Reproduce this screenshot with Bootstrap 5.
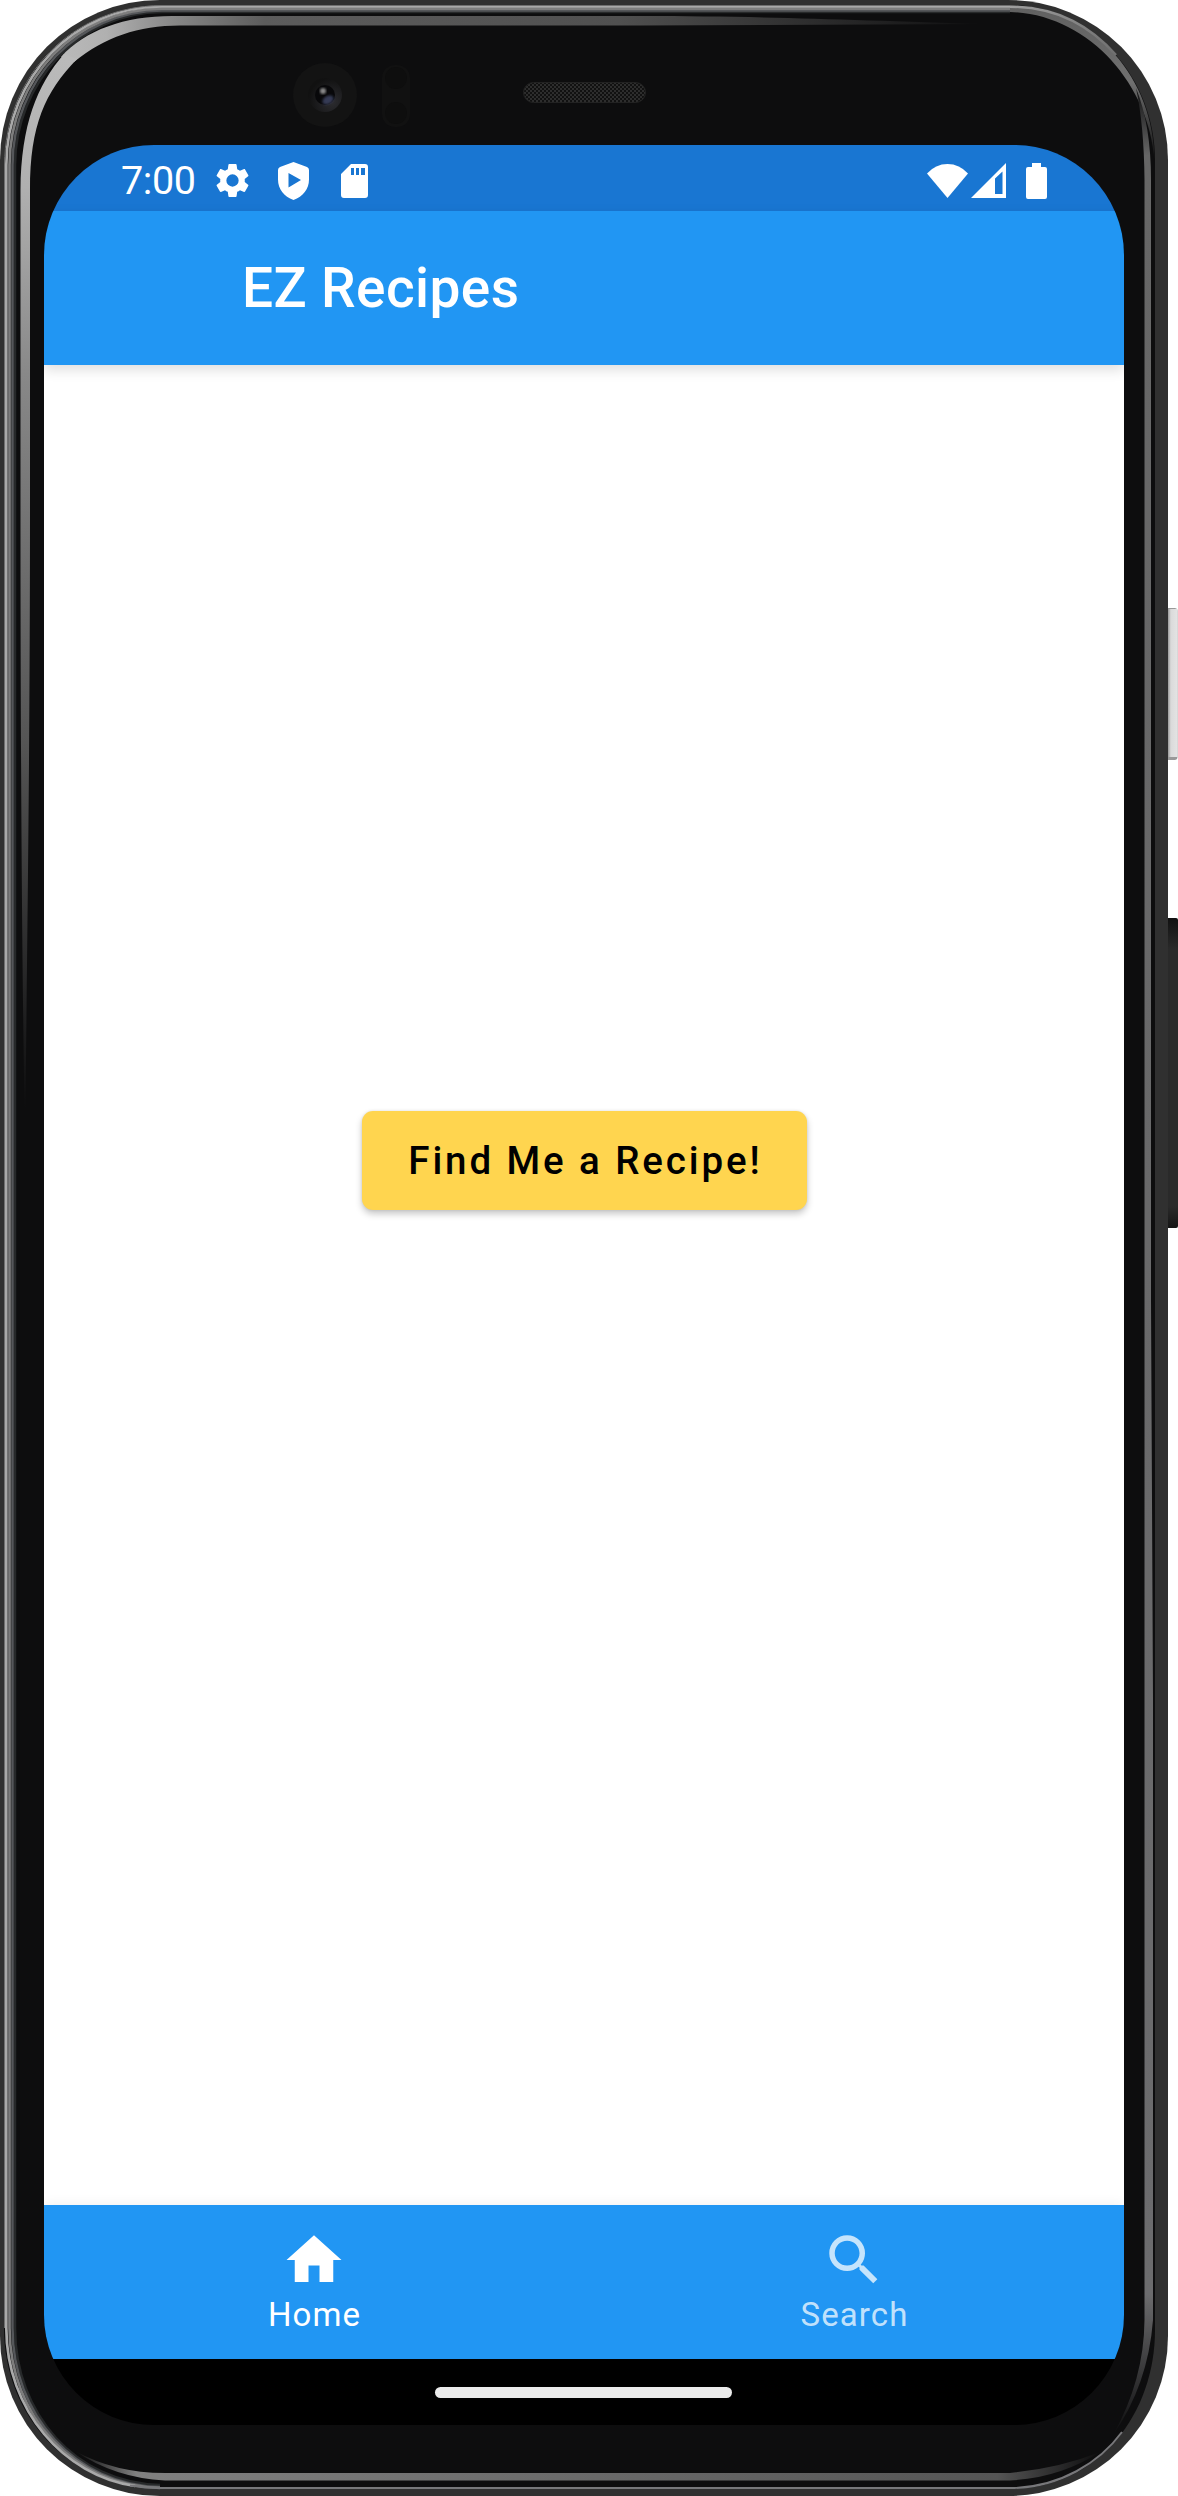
<!DOCTYPE html>
<html lang="en">
<head>
<meta charset="utf-8">
<meta name="viewport" content="width=device-width, initial-scale=1">
<title>EZ Recipes</title>
<link href="https://cdn.jsdelivr.net/npm/bootstrap@5.3.0/dist/css/bootstrap.min.css" rel="stylesheet">
<style>
  body { font-family: Roboto, "Liberation Sans", sans-serif; background: #fff; }
  .device { width: 1178px; height: 2496px; padding: 145px 54px 71px 44px; }
  .device-frame { position: absolute; inset: 0; }
  .screen { width: 1080px; height: 2280px; border-radius: 110px; }
  .status-bar { height: 66px; background: #1976d2; padding: 0 77px 0 77px; }
  .status-clock { font-size: 39.5px; line-height: 66px; padding-top: 5px; letter-spacing: -.4px; width: 75px; white-space: nowrap; }
  .status-icons { padding-top: 5px; }
  .status-icons svg { display: block; }
  .shield { margin-left: 25px; }
  .sdcard { margin-left: 32px; }
  .signal { margin: 0 20px 0 3px; }
  .app-bar { height: 154px; background: #2196f3; padding: 0 0 0 198px; box-shadow: 0 5px 12px rgba(0,0,0,.13); }
  .app-title { font-size: 55px; font-weight: 500; line-height: 154px; letter-spacing: .4px; color: #fff; }
  .home-view { padding-bottom: 249px; background: #fff; }
  .btn-find { width: 445px; height: 99px; border-radius: 11px; background: #ffd54f; color: #000; border: 0; font-size: 38.5px; font-weight: 500; letter-spacing: 2.9px; padding: 0 0 0 3px; box-shadow: 0 4px 7px rgba(0,0,0,.22), 0 0 3px rgba(0,0,0,.1); }
  .btn-find:hover { background: #ffca28; color: #000; }
  .bottom-nav { height: 154px; background: #2196f3; box-shadow: 0 0 12px rgba(0,0,0,.07); }
  .tab-link { padding: 22px 0 0; color: rgba(255,255,255,.74); font-size: 33px; line-height: 39px; letter-spacing: 1.1px; }
  .tab-link.active { color: #fff; }
  .tab-link svg { display: block; margin-bottom: 2px; }
  .tab-link span { padding-left: 1px; }
  .gesture-bar { height: 66px; background: #000; padding-right: 1px; }
  .gesture-pill { width: 297px; height: 11px; border-radius: 6px; background: #ebebeb; }
</style>
<script src="https://cdn.jsdelivr.net/npm/bootstrap@5.3.0/dist/js/bootstrap.bundle.min.js"></script>
</head>
<body>
<div class="device position-relative overflow-hidden">
  <svg class="device-frame" width="1178" height="2496" viewBox="0 0 1178 2496" aria-hidden="true">
    <defs>
      <linearGradient id="power" x1="0" x2="1" y1="0" y2="0"><stop offset="0" stop-color="#999"/><stop offset=".3" stop-color="#dadada"/><stop offset="1" stop-color="#e4e4e4"/></linearGradient>
      <linearGradient id="volume" x1="0" x2="0" y1="0" y2="1"><stop offset="0" stop-color="#111"/><stop offset=".1" stop-color="#2a2a2a"/><stop offset=".93" stop-color="#2a2a2a"/><stop offset="1" stop-color="#151515"/></linearGradient>
      <linearGradient id="topBand" gradientUnits="userSpaceOnUse" x1="60" y1="0" x2="990" y2="0"><stop offset="0" stop-color="#bababa"/><stop offset=".05" stop-color="#b0b0b0"/><stop offset=".12" stop-color="#888"/><stop offset=".22" stop-color="#5c5c5c"/><stop offset=".6" stop-color="#505050"/><stop offset="1" stop-color="#0d0d0e"/></linearGradient>
      <linearGradient id="leftBand" gradientUnits="userSpaceOnUse" x1="0" y1="60" x2="0" y2="1110"><stop offset="0" stop-color="#bababa"/><stop offset=".12" stop-color="#b0b0b0"/><stop offset=".3" stop-color="#888"/><stop offset=".65" stop-color="#555"/><stop offset="1" stop-color="#0d0d0e"/></linearGradient>
      <linearGradient id="rightBand" gradientUnits="userSpaceOnUse" x1="0" y1="85" x2="0" y2="2435"><stop offset="0" stop-color="#0d0d0e"/><stop offset=".03" stop-color="#666"/><stop offset=".94" stop-color="#6c6c6e"/><stop offset="1" stop-color="#0d0d0e"/></linearGradient>
      <linearGradient id="bottomBand" gradientUnits="userSpaceOnUse" x1="75" y1="0" x2="1100" y2="0"><stop offset="0" stop-color="#0d0d0e"/><stop offset=".06" stop-color="#808080"/><stop offset=".9" stop-color="#555"/><stop offset="1" stop-color="#0d0d0e"/></linearGradient>
      <linearGradient id="rimRight" gradientUnits="userSpaceOnUse" x1="0" y1="5" x2="0" y2="160"><stop offset="0" stop-color="#606060"/><stop offset=".5" stop-color="#707070"/><stop offset="1" stop-color="#111"/></linearGradient>
      <linearGradient id="rimGlint" gradientUnits="userSpaceOnUse" x1="1010" y1="0" x2="1110" y2="60"><stop offset="0" stop-color="#a0a0a0"/><stop offset="1" stop-color="#707070"/></linearGradient>
      <pattern id="mesh" width="4" height="4" patternUnits="userSpaceOnUse"><rect width="4" height="4" fill="#111"/><rect width="2" height="2" fill="#2d2d2d"/><rect x="2" y="2" width="2" height="2" fill="#2d2d2d"/></pattern>
      <radialGradient id="lens" cx=".7" cy=".7" r=".7"><stop offset="0" stop-color="#2c2c30"/><stop offset="1" stop-color="#111"/></radialGradient>
      <filter id="soft"><feGaussianBlur stdDeviation="1.2"/></filter>
    </defs>
    <rect x="1160" y="608" width="17.500" height="152" rx="3" fill="#999"/>
    <rect x="1168" y="609" width="9.500" height="148" fill="url(#power)"/>
    <rect x="1160" y="918" width="18" height="310" rx="2" fill="url(#volume)"/>
    <!-- metal shell, then the glass edge and its reflections -->
    <rect width="1168" height="2496" rx="160" fill="#303030"/>
    <path d="M4 165C4 77 72 5 162 5H1010C1092 5 1155 78 1155 160V2330C1155 2416 1096 2489 1010 2489H160C72 2489 4 2418 4 2328Z" fill="#0d0d0e"/>
    <path d="M1010 5.500C1092 5.500 1154.500 78 1154.500 160C1149 84 1088 14 1010 12Z" fill="url(#rimRight)"/>
    <path d="M1010 6.700C1060 7 1092 28 1116 55" fill="none" stroke="url(#rimGlint)" stroke-width="2.500"/>
    <g fill="none">
      <path d="M15 2328V165C15 83 80 12 162 12H1010M15 2328C15 2414 76 2483 160 2485" stroke="#27292a" stroke-width="2.500"/>
      <path d="M12.500 2328V165C12.500 81 78 10.500 162 10.500H1010M12.500 2328C12.500 2415 75 2485 160 2487" stroke="#55575a" stroke-width="2.500"/>
      <path d="M9.500 2328V165C9.500 79 76 8.700 162 8.700H1010M9.500 2328C9.500 2416 74 2486.500 160 2487.800" stroke="#7d7d7d" stroke-width="2.700"/>
      <path d="M6.300 2328V165C6.300 78 74 6.500 162 6.500H1010M6.300 2328C6.300 2410 64 2476 135 2486" stroke="#a9a9a9" stroke-width="2.700"/>
      <path d="M4.500 2328V165C4.500 77 72 5.500 162 5.500H1010" stroke="#6f6f6f" stroke-width="1"/>
      <path d="M130 2485.500Q145 2488 160 2488H1010C1060 2488 1100 2462 1122 2432" stroke="#77777a" stroke-width="2"/>
    </g>
    <path d="M61 57C85 30 125 16 172 16H640C760 16 850 20 990 24Q820 25 640 25.500H180C138 25.500 105 37 74 62Z" fill="url(#topBand)"/>
    <path d="M77 59C45 92 30 125 30 190V500C30 760 27 950 25.500 1110H24.500C22 950 20.500 760 20.500 500V190C21 125 37 85 64 54Z" fill="url(#leftBand)"/>
    <path d="M1136 88Q1151 125 1151 180V1300L1153 1700V2320Q1148 2385 1113 2435Q1144 2380 1144.500 2320V1700V180Q1144 125 1136 88Z" fill="url(#rightBand)"/>
    <path d="M75 2451Q115 2473 165 2473H1010Q1060 2468 1100 2452Q1060 2478 1010 2480.500H165Q115 2478 75 2451Z" fill="url(#bottomBand)"/>
    <!-- front camera, sensor and earpiece -->
    <circle cx="325" cy="95" r="32" fill="#131313"/>
    <circle cx="325" cy="95" r="17" fill="url(#lens)"/>
    <circle cx="325" cy="95" r="10" fill="#08080a"/>
    <ellipse cx="328" cy="100" rx="6" ry="4" transform="rotate(-30 328 100)" fill="#353b55" filter="url(#soft)"/>
    <circle cx="323" cy="91" r="3" fill="#888" filter="url(#soft)"/>
    <rect x="382" y="65" width="28" height="62" rx="13" fill="#111"/>
    <g fill="#0e0e0e"><circle cx="396" cy="78" r="11"/><circle cx="396" cy="113" r="11"/></g>
    <rect x="523.500" y="82.500" width="122" height="20" rx="10" fill="url(#mesh)" stroke="#222"/>
  </svg>

  <div class="screen position-relative overflow-hidden d-flex flex-column">
    <header class="status-bar d-flex align-items-center text-white flex-shrink-0">
      <div class="status-clock">7:00</div>
      <div class="status-icons d-flex align-items-center flex-grow-1">
        <svg class="ms-3" width="41" height="41" viewBox="0 0 24 24" fill="currentColor"><path d="M19.140 12.940c.04-.3.060-.61.060-.94 0-.32-.02-.64-.07-.94l2.030-1.580c.18-.14.230-.41.120-.61l-1.920-3.320c-.12-.22-.37-.29-.59-.22l-2.390.96c-.5-.38-1.030-.7-1.620-.94L14.400 2.810c-.04-.24-.24-.41-.48-.41h-3.840c-.24 0-.43.17-.47.41L9.250 5.350c-.59.24-1.130.57-1.620.94L5.240 5.330c-.22-.08-.47 0-.59.22L2.740 8.870c-.12.21-.08.47.120.61l2.030 1.580c-.05.3-.09.630-.09.94s.02.640.07.94l-2.030 1.580c-.18.14-.23.410-.12.610l1.920 3.320c.12.220.37.290.59.220l2.390-.96c.5.380 1.030.7 1.620.94l.36 2.540c.05.240.24.410.48.410h3.840c.24 0 .44-.17.470-.41l.36-2.540c.59-.24 1.130-.56 1.620-.94l2.390.96c.22.080.47 0 .59-.22l1.920-3.320c.12-.22.070-.47-.12-.61zM12 15.600a3.600 3.600 0 1 1 0-7.200 3.600 3.600 0 0 1 0 7.200z"/></svg>
        <svg width="31" height="38" viewBox="0 0 31 38" fill="currentColor" class="shield"><path fill-rule="evenodd" d="M15.500 0 29 5Q31 6 31 8V17.500C31 27 25 34.500 15.500 38 6 34.500 0 27 0 17.500V8Q0 6 2 5ZM10.500 11V25.500L23 18Z"/></svg>
        <svg width="27" height="34" viewBox="0 0 27 34" fill="currentColor" class="sdcard"><path fill-rule="evenodd" d="M10 0H24Q27 0 27 3V31Q27 34 24 34H3Q0 34 0 31V10ZM10 4V11H13V4ZM15 4V11H18V4ZM20 4V11H24V4Z"/></svg>
      </div>
      <div class="status-icons d-flex align-items-center">
        <svg width="41" height="34" viewBox="0 0 41 34" fill="currentColor"><path d="M0 9.500Q8.500 0 20.500 0T41 9.500L20.500 34Z"/></svg>
        <svg class="signal" width="35" height="35" viewBox="0 0 35 35" fill="currentColor"><path fill-rule="evenodd" d="M35 0V35H0ZM24 15.500V31H31.500V8.500Z"/></svg>
        <svg width="21" height="36" viewBox="0 0 21 36" fill="currentColor"><path d="M6 0H15V4H19Q21 4 21 6V34Q21 36 19 36H2Q0 36 0 34V6Q0 4 2 4H6Z"/></svg>
      </div>
    </header>
    <div class="app-bar flex-shrink-0 position-relative">
      <h1 class="app-title m-0">EZ Recipes</h1>
    </div>
    <main class="home-view flex-grow-1 d-flex align-items-center justify-content-center">
      <button type="button" class="btn btn-find">Find Me a Recipe!</button>
    </main>
    <nav class="bottom-nav nav nav-justified flex-nowrap flex-shrink-0">
      <a class="nav-item tab-link active text-decoration-none d-flex flex-column align-items-center" href="#">
        <svg width="66" height="66" viewBox="0 0 24 24" fill="currentColor"><path d="M10 20v-6h4v6h5v-8h3L12 3 2 12h3v8z"/></svg>
        <span>Home</span>
      </a>
      <a class="nav-item tab-link text-decoration-none d-flex flex-column align-items-center" href="#">
        <svg width="66" height="66" viewBox="0 0 24 24" fill="currentColor"><path d="M15.500 14h-.79l-.28-.27A6.471 6.471 0 0 0 16 9.500 6.500 6.500 0 1 0 9.500 16c1.610 0 3.090-.59 4.230-1.570l.27.280v.79l5 4.990L20.490 19l-4.990-5zm-6 0C7.010 14 5 11.990 5 9.500S7.010 5 9.500 5 14 7.010 14 9.500 11.990 14 9.500 14z"/></svg>
        <span>Search</span>
      </a>
    </nav>
    <div class="gesture-bar flex-shrink-0 d-flex align-items-center justify-content-center">
      <div class="gesture-pill"></div>
    </div>
  </div>
</div>
</body>
</html>
